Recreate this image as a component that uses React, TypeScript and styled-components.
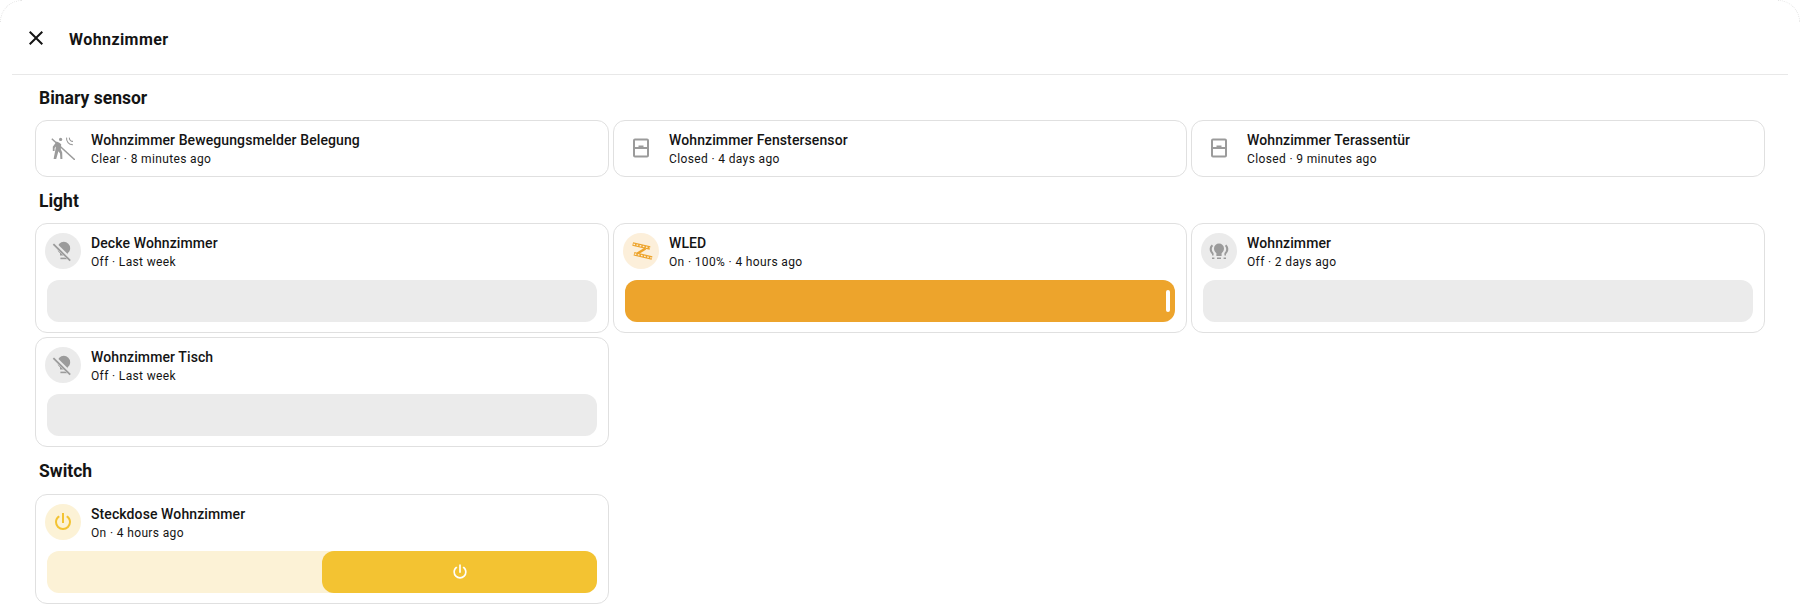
import React from "react";
import styled, { createGlobalStyle } from "styled-components";

const GlobalStyle = createGlobalStyle`
  html, body {
    margin: 0;
    padding: 0;
    background: #fff;
  }
  body {
    font-family: Roboto, "Liberation Sans", sans-serif;
    color: #141414;
  }
`;

const Dialog = styled.div`
  position: relative;
  height: 611px;
  box-sizing: border-box;
  overflow: hidden;
  background: #fff;

  &::before,
  &::after {
    content: "";
    position: absolute;
    top: 0;
    width: 22px;
    height: 22px;
    box-sizing: border-box;
    border-top: 1px dotted #e4e4e4;
  }
  &::before {
    left: 0;
    border-left: 1px dotted #e4e4e4;
    border-top-left-radius: 22px;
  }
  &::after {
    right: 0;
    border-right: 1px dotted #e4e4e4;
    border-top-right-radius: 22px;
  }
`;

const Header = styled.header`
  display: flex;
  align-items: center;
  height: 72px;
  margin: 0 12px;
  padding: 2px 12px 0;
  border-bottom: 1px solid #e8e8e8;
`;

const CloseButton = styled.div`
  display: flex;
  width: 24px;
  height: 24px;
  margin-right: 21px;
  color: #141414;
`;

const DialogTitle = styled.h1`
  margin: 2px 0 0;
  font-size: 16px;
  font-weight: 700;
  letter-spacing: 0.42px;
`;

const Content = styled.main`
  padding: 0 35px;
`;

const SectionTitle = styled.h2<{ $height: number }>`
  display: flex;
  align-items: center;
  box-sizing: border-box;
  height: ${(p) => p.$height}px;
  margin: 0;
  padding: 1px 0 0 4px;
  font-size: 17.5px;
  font-weight: 700;
`;

const CardGrid = styled.div`
  display: grid;
  grid-template-columns: repeat(3, 574px);
  gap: 4px;
`;

const Card = styled.div`
  box-sizing: border-box;
  padding: 9px 9px 10px;
  border: 1px solid #e0e0e0;
  border-radius: 12px;
  background: #fff;
`;

const CardTop = styled.div`
  display: flex;
  align-items: center;
  gap: 10px;
  height: 36px;
`;

const IconCircle = styled.div<{ $bg?: string; $color: string }>`
  display: flex;
  align-items: center;
  justify-content: center;
  flex: none;
  width: 36px;
  height: 36px;
  border-radius: 50%;
  background: ${(p) => p.$bg ?? "transparent"};
  color: ${(p) => p.$color};
`;

const CardText = styled.div`
  display: flex;
  flex-direction: column;
  padding-top: 3px;
`;

const CardName = styled.span`
  font-size: 14px;
  font-weight: 500;
  line-height: 20px;
  letter-spacing: 0.1px;
`;

const CardState = styled.span`
  font-size: 12px;
  line-height: 19px;
  letter-spacing: 0.36px;
`;

const Slider = styled.div<{ $on?: boolean }>`
  display: flex;
  align-items: center;
  justify-content: flex-end;
  height: 42px;
  margin: 11px 2px 0;
  padding-right: 5px;
  box-sizing: border-box;
  border-radius: 12px;
  background: ${(p) => (p.$on ? "#eda42c" : "#ebebeb")};
`;

const SliderHandle = styled.div`
  width: 4px;
  height: 22px;
  border-radius: 2px;
  background: #fff;
`;

const Toggle = styled.div`
  display: grid;
  grid-template-columns: 1fr 1fr;
  height: 42px;
  margin: 11px 2px 0;
  border-radius: 12px;
  background: #fcf2d6;
`;

const ToggleThumb = styled.div`
  display: flex;
  align-items: center;
  justify-content: center;
  grid-column: 2;
  border-radius: 12px;
  background: #f3c332;
  color: #fff;
`;

const GRAY = "#9b9b9b";
const YELLOW = "#f3c332";
const ORANGE = "#eda42c";

const Svg = ({ size = 24, children }: { size?: number; children: React.ReactNode }) => (
  <svg width={size} height={size} viewBox="0 0 24 24" fill="currentColor">
    {children}
  </svg>
);

const CloseIcon = () => (
  <Svg>
    <path d="M19,6.41L17.59,5L12,10.59L6.41,5L5,6.41L10.59,12L5,17.59L6.41,19L12,13.41L17.59,19L19,17.59L13.41,12L19,6.41Z" />
  </Svg>
);

const PowerIcon = ({ size = 24 }: { size?: number }) => (
  <Svg size={size}>
    <path d="M16.56,5.44L15.11,6.89C16.84,7.94 18,9.83 18,12A6,6 0 0,1 12,18A6,6 0 0,1 6,12C6,9.83 7.16,7.94 8.88,6.88L7.44,5.44C5.36,6.88 4,9.28 4,12A8,8 0 0,0 12,20A8,8 0 0,0 20,12C20,9.28 18.64,6.88 16.56,5.44M13,3H11V13H13" />
  </Svg>
);

const MotionOffIcon = () => (
  <Svg>
    <circle cx="9.6" cy="3.4" r="1.6" />
    <path d="M5.6 5.6L8.4 6.8 10.2 8.2 9.8 13.2 11.2 16.4 11.4 23H9.4L9 17.4 7.4 15.2 5.2 23H2.6L5 10.6 3.6 12V15H1.8V10.8Z" />
    <path d="M0.8 2.8L24 24" fill="none" stroke="currentColor" strokeWidth="1.5" />
    <path d="M15.6 1.6A6 6 0 0 0 21.8 8.6M18.4 1.6A3.4 3.4 0 0 0 22 5.4" fill="none" stroke="currentColor" strokeWidth="1.1" />
  </Svg>
);

const WindowIcon = () => (
  <Svg>
    <path d="M6 2.5H18A2 2 0 0 1 20 4.5V19.5A2 2 0 0 1 18 21.5H6A2 2 0 0 1 4 19.5V4.5A2 2 0 0 1 6 2.5ZM6 4.4V11H9.5V9.6H14.5V11H18V4.4ZM6 12.9V19.6H18V12.9Z" fillRule="evenodd" />
  </Svg>
);

const BulbOffIcon = () => (
  <Svg>
    <path d="M12.8 2.8A6.4 6.4 0 0 1 19.2 9.2C19.2 11.4 18.1 13.1 16.6 14.2V16.6H9V14.2C7.5 13.1 6.4 11.4 6.4 9.2A6.4 6.4 0 0 1 12.8 2.8Z" />
    <path d="M9.4 18.6H16V20.2H9.4Z" />
    <path d="M2.5 4L19.4 20.6" fill="none" stroke="#ebebeb" strokeWidth="4" />
    <path d="M2.4 5.2L19.2 21.6" fill="none" stroke="currentColor" strokeWidth="1.8" />
  </Svg>
);

const LedStripIcon = () => (
  <Svg>
    <g fill="none">
      <path d="M16.5 9.5L8.5 14.5" stroke={ORANGE} strokeWidth="2.6" />
      <path d="M3.7 5L21 9" stroke={ORANGE} strokeWidth="3.6" />
      <path d="M5 14.8L23 19" stroke={ORANGE} strokeWidth="3.6" />
      <path d="M4.4 5.2L20.6 8.9" stroke="#fcefda" strokeWidth="1.3" strokeDasharray="1.7 1.5" />
      <path d="M5.7 15L22.6 18.9" stroke="#fcefda" strokeWidth="1.3" strokeDasharray="1.7 1.5" />
    </g>
  </Svg>
);

const BulbGroupIcon = () => (
  <Svg>
    <g transform="translate(0 2)">
      <path d="M12 2.5A5 5 0 0 1 17 7.5C17 9.6 15.9 11.2 14.6 12.2V15H9.4V12.2C8.1 11.2 7 9.6 7 7.5A5 5 0 0 1 12 2.5Z" />
      <path d="M4.8 3.6L6.1 4.9C4.7 6.1 4.5 8.4 5.2 10.1 5.6 11 6.4 11.6 6.6 12.4V14.6H5V13C4.2 12.2 3.1 10.9 2.8 9.4 2.3 7.2 3.2 4.9 4.8 3.6Z" />
      <path d="M19.2 3.6L17.9 4.9C19.3 6.1 19.5 8.4 18.8 10.1 18.4 11 17.6 11.6 17.4 12.4V14.6H19V13C19.8 12.2 20.9 10.9 21.2 9.4 21.7 7.2 20.8 4.9 19.2 3.6Z" />
      <path d="M5 16.6H7.4V18H5ZM10 16.6H14V18H10ZM16.6 16.6H19V18H16.6Z" />
    </g>
  </Svg>
);

const TileHead = ({
  name,
  state,
  icon,
  bg,
  color,
}: {
  name: string;
  state: string;
  icon: React.ReactNode;
  bg?: string;
  color: string;
}) => (
  <CardTop>
    <IconCircle $bg={bg} $color={color}>
      {icon}
    </IconCircle>
    <CardText>
      <CardName>{name}</CardName>
      <CardState>{state}</CardState>
    </CardText>
  </CardTop>
);

export default function App() {
  return (
    <Dialog>
      <GlobalStyle />
      <Header>
        <CloseButton>
          <CloseIcon />
        </CloseButton>
        <DialogTitle>Wohnzimmer</DialogTitle>
      </Header>
      <Content>
        <section>
          <SectionTitle $height={45}>Binary sensor</SectionTitle>
          <CardGrid>
            <Card>
              <TileHead
                name="Wohnzimmer Bewegungsmelder Belegung"
                state="Clear · 8 minutes ago"
                icon={<MotionOffIcon />}
                color={GRAY}
              />
            </Card>
            <Card>
              <TileHead
                name="Wohnzimmer Fenstersensor"
                state="Closed · 4 days ago"
                icon={<WindowIcon />}
                color={GRAY}
              />
            </Card>
            <Card>
              <TileHead
                name="Wohnzimmer Terassentür"
                state="Closed · 9 minutes ago"
                icon={<WindowIcon />}
                color={GRAY}
              />
            </Card>
          </CardGrid>
        </section>
        <section>
          <SectionTitle $height={46}>Light</SectionTitle>
          <CardGrid>
            <Card>
              <TileHead
                name="Decke Wohnzimmer"
                state="Off · Last week"
                icon={<BulbOffIcon />}
                bg="#ebebeb"
                color={GRAY}
              />
              <Slider />
            </Card>
            <Card>
              <TileHead
                name="WLED"
                state="On · 100% · 4 hours ago"
                icon={<LedStripIcon />}
                bg="#fcefda"
                color={ORANGE}
              />
              <Slider $on>
                <SliderHandle />
              </Slider>
            </Card>
            <Card>
              <TileHead
                name="Wohnzimmer"
                state="Off · 2 days ago"
                icon={<BulbGroupIcon />}
                bg="#ebebeb"
                color={GRAY}
              />
              <Slider />
            </Card>
            <Card>
              <TileHead
                name="Wohnzimmer Tisch"
                state="Off · Last week"
                icon={<BulbOffIcon />}
                bg="#ebebeb"
                color={GRAY}
              />
              <Slider />
            </Card>
          </CardGrid>
        </section>
        <section>
          <SectionTitle $height={47}>Switch</SectionTitle>
          <CardGrid>
            <Card>
              <TileHead
                name="Steckdose Wohnzimmer"
                state="On · 4 hours ago"
                icon={<PowerIcon />}
                bg="#fcf2d6"
                color={YELLOW}
              />
              <Toggle>
                <ToggleThumb>
                  <PowerIcon size={20} />
                </ToggleThumb>
              </Toggle>
            </Card>
          </CardGrid>
        </section>
      </Content>
    </Dialog>
  );
}
